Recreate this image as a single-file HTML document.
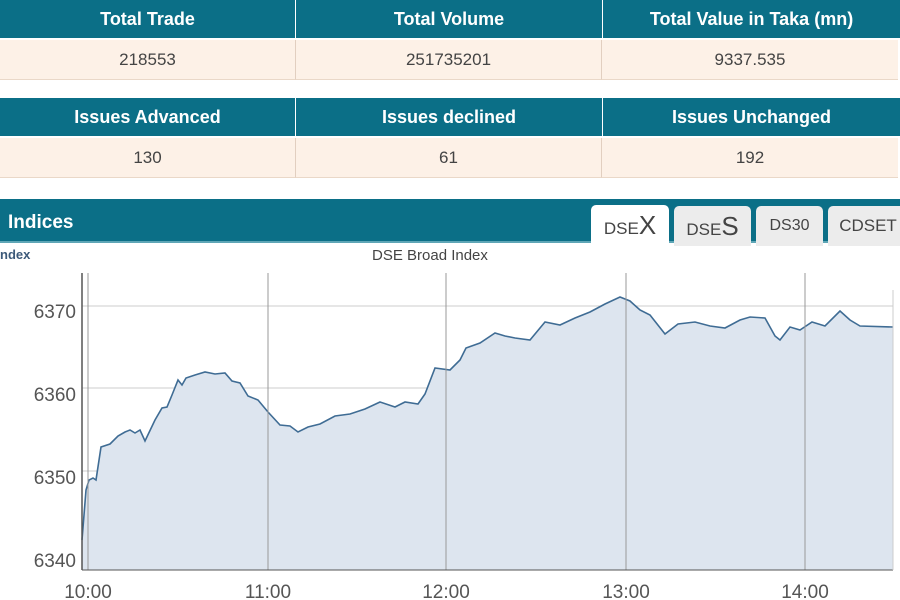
<!DOCTYPE html>
<html><head><meta charset="utf-8"><style>
body{margin:0;width:900px;height:600px;overflow:hidden;background:#fff;font-family:"Liberation Sans",Arial,sans-serif;position:relative}
.row{position:absolute;left:0;width:900px;display:flex}
.row div{box-sizing:border-box;text-align:center}
.h div{background:#0b6f87;color:#fff;font-weight:bold;font-size:18px;line-height:38px;height:38px}
.v div{background:#fdf1e7;color:#444;font-size:17px;line-height:39px;height:40px;border-bottom:1px solid #ead8c8}
.c1{width:295px}.c2{width:306px;margin-left:1px}.c3{width:297px;margin-left:1px}
.v .c2,.v .c3{border-left:1px solid #e2cfc0;margin-left:0}
.bar{position:absolute;left:0;top:199px;width:900px;height:42px;background:#0b6f87;border-bottom:2px solid #5fa6b6}
.bar span{position:absolute;left:8px;top:13px;color:#fff;font-weight:bold;font-size:19px}
.tab{position:absolute;top:206px;height:40px;background:#ececec;border-radius:5px 5px 0 0;color:#444;font-size:17px;text-align:center;line-height:40px}
</style></head><body>
<div class="row h" style="top:0"><div class="c1">Total Trade</div><div class="c2">Total Volume</div><div class="c3">Total Value in Taka (mn)</div></div>
<div class="row v" style="top:40px"><div class="c1">218553</div><div class="c2">251735201</div><div class="c3">9337.535</div></div>
<div class="row h" style="top:98px"><div class="c1">Issues Advanced</div><div class="c2">Issues declined</div><div class="c3">Issues Unchanged</div></div>
<div class="row v" style="top:138px"><div class="c1">130</div><div class="c2">61</div><div class="c3">192</div></div>
<div class="bar"><span>Indices</span></div>
<div class="tab" style="left:591px;width:78px;background:#fff;height:44px;top:205px">DSE<span style="font-size:26px">X</span></div>
<div class="tab" style="left:674px;width:77px">DSE<span style="font-size:26px">S</span></div>
<div class="tab" style="left:756px;width:67px;font-size:16px">DS30</div>
<div class="tab" style="left:828px;width:80px">CDSET</div>
<div style="position:absolute;left:0;top:247px;font-size:13px;font-weight:bold;color:#3d5a7a">ndex</div>
<div style="position:absolute;left:372px;top:247px;font-size:15px;color:#444">DSE Broad Index</div>
<svg style="position:absolute;left:0;top:0" width="900" height="600">
<g stroke="#ccc" stroke-width="1">
<line x1="82" y1="306" x2="893" y2="306"/><line x1="82" y1="388" x2="893" y2="388"/><line x1="82" y1="471" x2="893" y2="471"/><line x1="82" y1="553" x2="893" y2="553"/>
</g>
<polygon fill="#dde5ef" points="82,570 82,540 86,490 89,480 93,478 96,480 101,447 110,444 118,436 125,432 130,430 135,433 140,430 145,441 155,420 162,408 167,407 172,395 178,380 182,385 186,378 195,375 205,372 215,374 225,373 232,381 240,383 248,396 258,400 268,412 280,425 290,426 298,432 308,427 320,424 335,416 350,414 365,409 380,402 395,407 405,402 418,404 425,394 435,368 450,370 460,360 466,348 480,343 495,333 505,336 515,338 530,340 545,322 560,325 575,318 590,312 605,304 620,297 630,301 640,310 650,315 665,334 678,324 695,322 710,326 725,328 740,320 750,317 765,318 775,336 780,340 790,327 800,330 812,322 825,326 840,311 850,320 860,326 893,327 893,570"/>
<polyline fill="none" stroke="#3f6c94" stroke-width="1.6" points="82,540 86,490 89,480 93,478 96,480 101,447 110,444 118,436 125,432 130,430 135,433 140,430 145,441 155,420 162,408 167,407 172,395 178,380 182,385 186,378 195,375 205,372 215,374 225,373 232,381 240,383 248,396 258,400 268,412 280,425 290,426 298,432 308,427 320,424 335,416 350,414 365,409 380,402 395,407 405,402 418,404 425,394 435,368 450,370 460,360 466,348 480,343 495,333 505,336 515,338 530,340 545,322 560,325 575,318 590,312 605,304 620,297 630,301 640,310 650,315 665,334 678,324 695,322 710,326 725,328 740,320 750,317 765,318 775,336 780,340 790,327 800,330 812,322 825,326 840,311 850,320 860,326 893,327"/>
<g stroke="#999" stroke-width="1">
<line x1="88" y1="273" x2="88" y2="570"/><line x1="268" y1="273" x2="268" y2="570"/><line x1="446" y1="273" x2="446" y2="570"/><line x1="626" y1="273" x2="626" y2="570"/><line x1="805" y1="273" x2="805" y2="570"/>
</g>
<line x1="82" y1="273" x2="82" y2="570" stroke="#555" stroke-width="1.5"/>
<line x1="82" y1="570" x2="893" y2="570" stroke="#555" stroke-width="1"/>
<line x1="893" y1="290" x2="893" y2="570" stroke="#ccc"/>
<g font-family="Liberation Sans,Arial,sans-serif" font-size="19" fill="#555" text-anchor="end">
<text x="76" y="318">6370</text><text x="76" y="401">6360</text><text x="76" y="484">6350</text><text x="76" y="567">6340</text>
</g>
<g font-family="Liberation Sans,Arial,sans-serif" font-size="19" fill="#555" text-anchor="middle">
<text x="88" y="598">10:00</text><text x="268" y="598">11:00</text><text x="446" y="598">12:00</text><text x="626" y="598">13:00</text><text x="805" y="598">14:00</text>
</g>
</svg>
</body></html>
